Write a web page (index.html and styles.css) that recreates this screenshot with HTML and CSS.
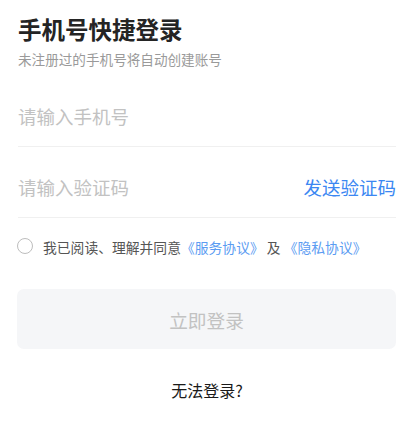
FILE: index.html
```html
<!DOCTYPE html>
<html lang="zh-CN">
<head>
<meta charset="utf-8">
<title>手机号快捷登录</title>
<link rel="stylesheet" href="styles.css">
</head>
<body>
<main class="page">
  <h1 class="title">手机号快捷登录</h1>
  <p class="subtitle">未注册过的手机号将自动创建账号</p>

  <div class="field">
    <input class="input" type="tel" placeholder="请输入手机号">
  </div>
  <div class="field">
    <input class="input" type="text" placeholder="请输入验证码">
    <span class="send">发送验证码</span>
  </div>

  <div class="agree">
    <span class="check"></span>
    <span class="agree-text">我已阅读、理解并同意<a class="link">《服务协议》</a> 及 <a class="link">《隐私协议》</a></span>
  </div>

  <button class="submit" type="button">立即登录</button>

  <p class="help">无法登录?</p>
</main>
</body>
</html>
```

FILE: styles.css
```css
* { box-sizing: border-box; }
html, body { margin: 0; padding: 0; background: #fff; }
body {
  font-family: "Noto Sans CJK SC", "Noto Sans", sans-serif;
  color: #222;
}
.page {
  padding: 14px 20px 0 18px;
  display: flex;
  flex-direction: column;
}
.title {
  margin: 0;
  font-size: 23.5px;
  line-height: 30px;
  font-weight: 700;
  color: #242424;
}
.subtitle {
  margin: 6px 0 0;
  font-size: 13.6px;
  line-height: 18px;
  color: #9a9a9a;
}
.field {
  height: 71px;
  padding-top: 10px;
  border-bottom: 1px solid #f0f0f0;
  display: flex;
  align-items: center;
}
.subtitle + .field { margin-top: 8px; }
.input {
  flex: 1;
  min-width: 0;
  border: none;
  outline: none;
  padding: 0;
  background: transparent;
  font-family: inherit;
  font-size: 18.5px;
  line-height: 26px;
  color: #222;
}
.input::placeholder { color: #c2c2c2; }
.send {
  font-size: 18.5px;
  line-height: 26px;
  color: #3b87f2;
}
.agree {
  margin-top: 18px;
  display: flex;
  align-items: center;
  height: 20px;
}
.check {
  width: 16px;
  height: 16px;
  border: 1px solid #bdbdbd;
  border-radius: 50%;
  margin-left: -1px;
  flex-shrink: 0;
}
.agree-text {
  margin-left: 10px;
  font-size: 13.8px;
  line-height: 20px;
  color: #555;
  position: relative;
  top: 1px;
}
.link { color: #5b9cf2; text-decoration: none; }
.submit {
  margin: 33px 0 0 -1px;
  height: 60px;
  border: none;
  border-radius: 7px;
  background: #f5f6f8;
  font-family: inherit;
  font-size: 18.7px;
  color: #c2c2c2;
  padding: 0;
}
.help {
  margin: 30px 0 0;
  text-align: center;
  font-size: 16px;
  line-height: 22px;
  font-weight: 400;
  color: #1a1a1a;
}
```
